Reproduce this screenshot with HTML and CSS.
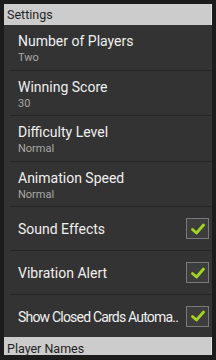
FILE: index.html
```html
<!DOCTYPE html>
<html>
<head>
<meta charset="utf-8">
<link rel="stylesheet" href="styles.css">
</head>
<body>
<div class="panel">
  <div class="cat">Settings</div>
  <div class="row two">
    <div class="text"><div class="title">Number of Players</div><div class="sub">Two</div></div>
  </div>
  <div class="row two">
    <div class="text"><div class="title">Winning Score</div><div class="sub">30</div></div>
  </div>
  <div class="row two">
    <div class="text"><div class="title">Difficulty Level</div><div class="sub">Normal</div></div>
  </div>
  <div class="row two">
    <div class="text"><div class="title">Animation Speed</div><div class="sub">Normal</div></div>
  </div>
  <div class="row one">
    <div class="text"><div class="title">Sound Effects</div></div>
    <div class="check"><svg viewBox="0 0 20 20" width="20" height="20"><path d="M4.5 10.5 L8.5 14 L15.5 6" fill="none" stroke="#a3d423" stroke-width="2.8" stroke-linecap="round" stroke-linejoin="round"/></svg></div>
  </div>
  <div class="row one">
    <div class="text"><div class="title">Vibration Alert</div></div>
    <div class="check"><svg viewBox="0 0 20 20" width="20" height="20"><path d="M4.5 10.5 L8.5 14 L15.5 6" fill="none" stroke="#a3d423" stroke-width="2.8" stroke-linecap="round" stroke-linejoin="round"/></svg></div>
  </div>
  <div class="row one last">
    <div class="text"><div class="title tight">Show Closed Cards Automa..</div></div>
    <div class="check"><svg viewBox="0 0 20 20" width="20" height="20"><path d="M4.5 10.5 L8.5 14 L15.5 6" fill="none" stroke="#a3d423" stroke-width="2.8" stroke-linecap="round" stroke-linejoin="round"/></svg></div>
  </div>
  <div class="cat bottom">Player Names</div>
</div>
</body>
</html>
```
FILE: styles.css
```css
html, body {
  margin: 0;
  padding: 0;
  background: #1c1c1c;
  height: 100%;
  overflow: hidden;
}
body {
  font-family: Roboto, "Noto Sans", sans-serif;
  padding: 4px 4px 5px 4px;
  box-sizing: border-box;
}
.panel {
  background: #333333;
  height: 100%;
  display: flex;
  flex-direction: column;
  overflow: hidden;
}
.cat {
  background: #cccccc;
  color: #1f1f1f;
  font-size: 12.5px;
  height: 21px;
  line-height: 22px;
  padding-left: 3px;
  flex: none;
  border-right: 1px solid #e4e4e4;
}
.cat.bottom {
  flex: 1;
  line-height: 20px;
  padding-top: 2px;
}
.row {
  flex: none;
  box-sizing: border-box;
  border-bottom: 1px solid #262626;
  margin-left: 6px;
  padding-left: 8px;
  padding-right: 3px;
  display: flex;
  align-items: center;
}
.row.two { height: 45.5px; }
.row.one { height: 44px; }
.row.last { height: 42px; border-bottom: none; }
.text { flex: 1; min-width: 0; }
.two .text { padding-top: 3px; }
.one .text { padding-top: 1px; }
.title {
  color: #f0f0f0;
  font-size: 14px;
  line-height: 16px;
  white-space: nowrap;
}
.title.tight { letter-spacing: -0.8px; }
.sub {
  color: #a8a8a8;
  font-size: 11px;
  line-height: 12px;
  margin-top: 3px;
}
.check {
  width: 23px;
  height: 21px;
  box-sizing: border-box;
  border: 1.5px solid #7a7a7a;
  background: #3d3d3d;
  display: flex;
  align-items: center;
  justify-content: center;
  flex: none;
}
.check svg { display: block; }
```
